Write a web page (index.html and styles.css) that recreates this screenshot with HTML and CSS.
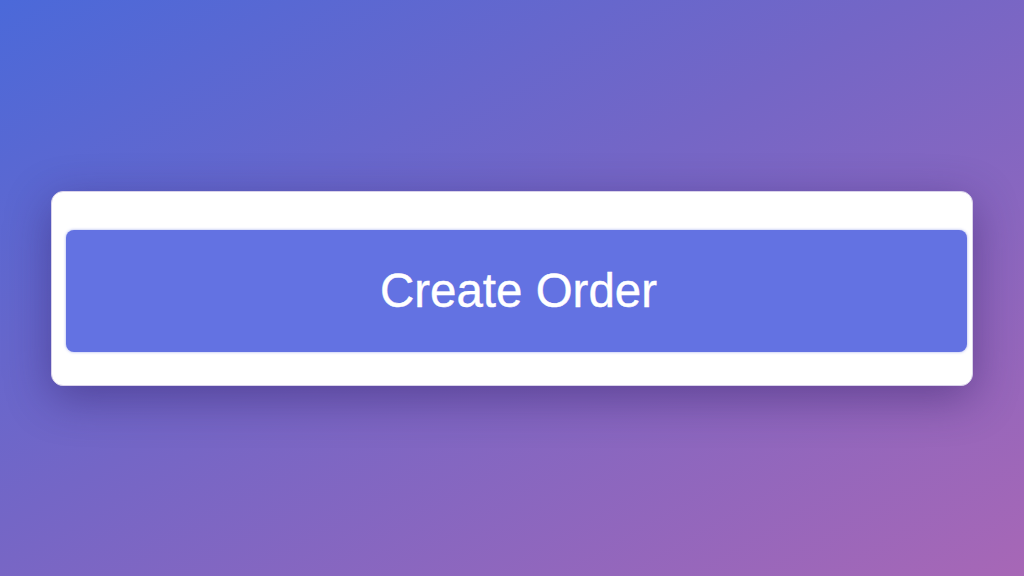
FILE: index.html
```html
<!DOCTYPE html>
<html lang="en">
<head>
<meta charset="utf-8">
<title>Create Order</title>
<link rel="stylesheet" href="styles.css">
</head>
<body>
<main class="stage">
  <div class="card">
    <button class="primary-btn" type="button">Create Order</button>
  </div>
</main>
</body>
</html>
```

FILE: styles.css
```css
html, body {
  margin: 0;
  padding: 0;
  height: 100%;
}
body {
  font-family: "Liberation Sans", Arial, sans-serif;
  background: linear-gradient(150deg, #4b69d9 0%, #7466c6 45%, #a767b6 100%);
  overflow: hidden;
}
.stage {
  height: 100vh;
  display: flex;
  align-items: center;
  justify-content: center;
}
.card {
  box-sizing: border-box;
  width: 922px;
  height: 195px;
  padding: 38px 5px 33px 14px;
  background: #ffffff;
  border: 1px solid #d9d2ea;
  border-radius: 12px;
  box-shadow: 0 12px 45px rgba(45, 25, 95, 0.45);
  display: flex;
}
.primary-btn {
  flex: 1;
  height: 122px;
  border: none;
  border-radius: 8px;
  background: #6372e2;
  color: #ffffff;
  font-family: "Liberation Sans", Arial, sans-serif;
  font-size: 47.5px;
  line-height: 1;
  padding: 0 0 0 4px;
  -webkit-text-stroke: 0.4px #ffffff;
  box-shadow: 0 0 3px rgba(99, 114, 226, 0.6);
  cursor: pointer;
}
```
